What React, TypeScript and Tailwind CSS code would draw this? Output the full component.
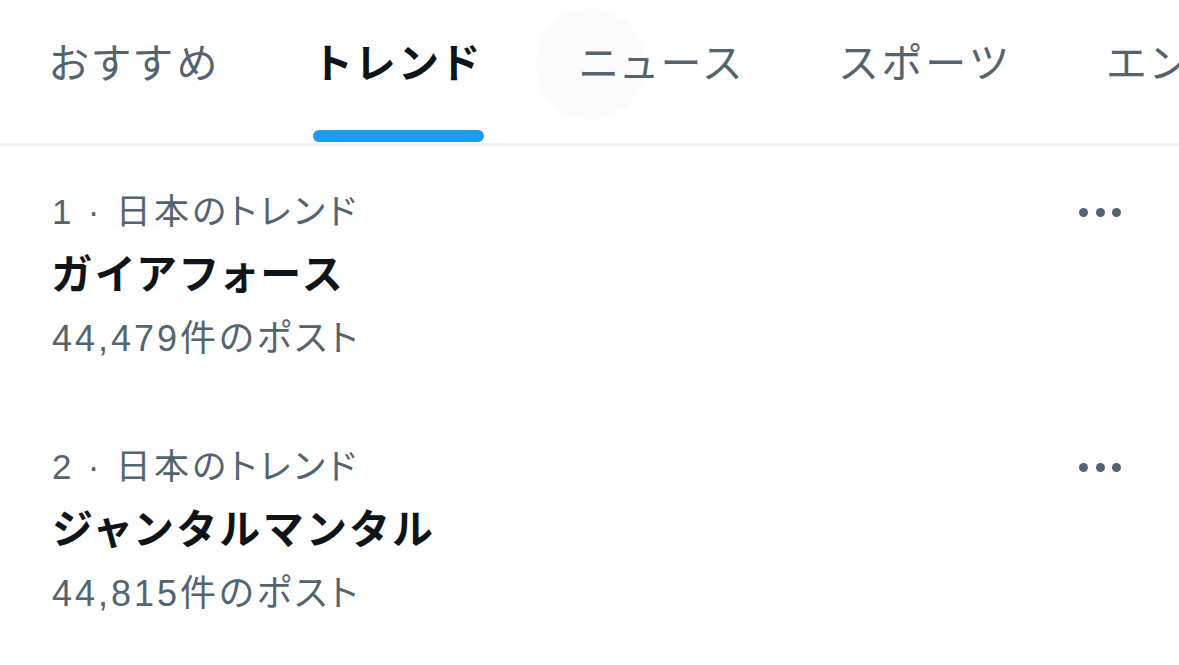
const tabs = ["おすすめ", "トレンド", "ニュース", "スポーツ", "エンタメ"];

const trends = [
  { rank: 1, name: "ガイアフォース", posts: "44,479" },
  { rank: 2, name: "ジャンタルマンタル", posts: "44,815" },
];

export default function App() {
  return (
    <div className="w-[1179px] h-[665px] overflow-hidden bg-white font-['Liberation_Sans','Noto_Sans_CJK_JP',sans-serif] [font-feature-settings:'palt']">
      <div className="relative flex h-[143px] whitespace-nowrap">
        {/* faint touch ripple behind ニュース */}
        <div className="absolute left-[536px] top-[8px] w-[108px] h-[112px] rounded-full bg-[#fbfbfc]" />
        {tabs.map((tab, i) => (
          <div key={tab} className="relative flex items-center pl-[49px] pr-[46px] pb-[14px] shrink-0">
            <span
              className={
                i === 1
                  ? "relative text-[41px] leading-none tracking-[5.5px] font-bold text-[#0f1419]"
                  : "relative text-[41px] leading-none tracking-[4.5px] text-[#536471]"
              }
            >
              {tab}
            </span>
            {i === 1 && (
              <div className="absolute left-[46px] right-[46px] bottom-[1px] h-[12px] rounded-full bg-[#1d9bf0]" />
            )}
          </div>
        ))}
      </div>
      <div className="h-[3px] bg-[#eff3f4]" />

      {trends.map((t) => (
        <div key={t.rank} className="flex pl-[52px] pr-[58px] pt-[35px] pb-[30px]">
          <div className="flex-1">
            <div className="text-[35px] leading-[62px] tracking-[3.3px] text-[#536471]">
              {t.rank} · 日本のトレンド
            </div>
            <div className="text-[41px] leading-[64px] tracking-[5px] font-bold text-[#0f1419]">{t.name}</div>
            <div className="text-[36px] leading-[64px] tracking-[3px] text-[#536471]">{t.posts}件のポスト</div>
          </div>
          <div className="flex h-[62px] items-center gap-[7.5px]">
            <span className="w-[9px] h-[9px] rounded-full bg-[#536471]" />
            <span className="w-[9px] h-[9px] rounded-full bg-[#536471]" />
            <span className="w-[9px] h-[9px] rounded-full bg-[#536471]" />
          </div>
        </div>
      ))}
    </div>
  );
}
